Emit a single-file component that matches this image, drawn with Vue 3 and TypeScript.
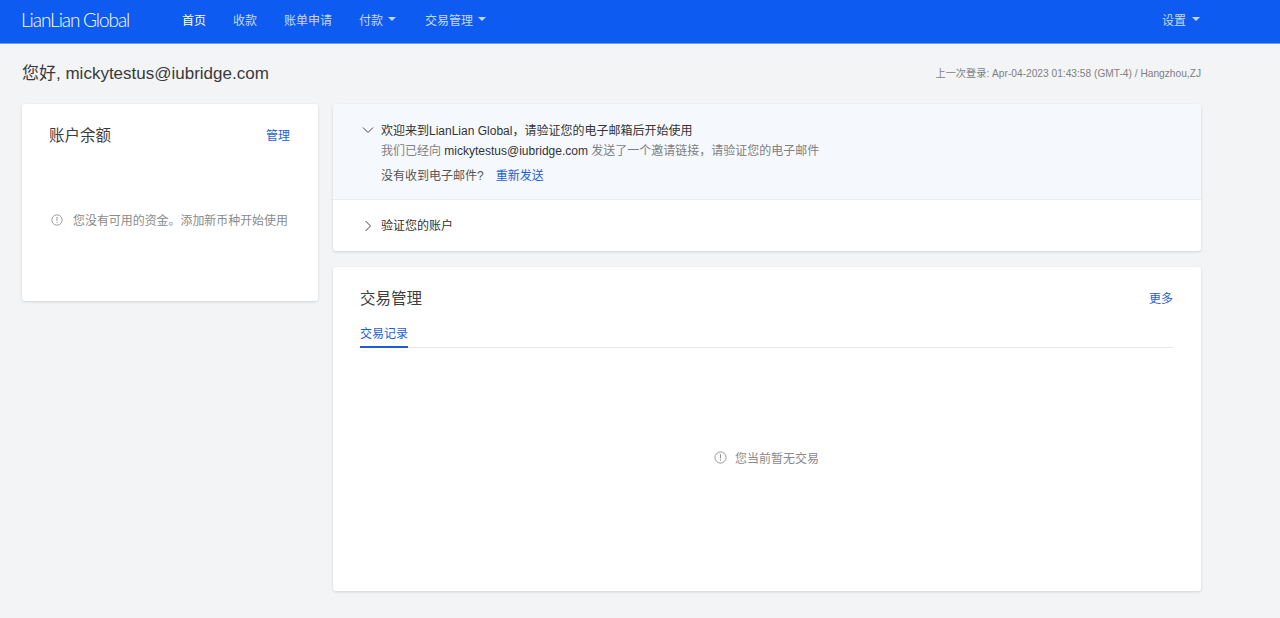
<script setup lang="ts">
const navItems: { label: string; caret: boolean; active?: boolean }[] = [
  { label: '首页', caret: false, active: true },
  { label: '收款', caret: false },
  { label: '账单申请', caret: false },
  { label: '付款', caret: true },
  { label: '交易管理', caret: true },
]
</script>

<template>
  <div class="page">
    <header class="topbar">
      <div class="logo">LianLian Global</div>
      <nav class="nav">
        <span v-for="item in navItems" :key="item.label" class="nav-item" :class="{ active: item.active }">
          {{ item.label }}<i v-if="item.caret" class="caret"></i>
        </span>
      </nav>
      <span class="nav-item settings">设置<i class="caret"></i></span>
    </header>

    <main class="main">
      <div class="greet-row">
        <h1 class="greet">您好, mickytestus@iubridge.com</h1>
        <span class="last-login">上一次登录: Apr-04-2023 01:43:58 (GMT-4) / Hangzhou,ZJ</span>
      </div>

      <div class="columns">
        <section class="card balance">
          <div class="card-head">
            <h2 class="card-title">账户余额</h2>
            <a class="link">管理</a>
          </div>
          <div class="notice balance-notice">
            <svg class="info" viewBox="0 0 14 14" width="12" height="12">
              <circle cx="7" cy="7" r="6" fill="none" stroke="currentColor" stroke-width="1" />
              <path d="M7 3.4v4.6M7 9.2v1.2" fill="none" stroke="currentColor" stroke-width="1.1" />
            </svg>
            <span>您没有可用的资金。添加新币种开始使用</span>
          </div>
        </section>

        <div class="right">
          <section class="card steps">
            <div class="step open">
              <svg class="chev" viewBox="0 0 12 12" width="12" height="12">
                <path d="M1 3.5L6 8.5L11 3.5" fill="none" stroke="currentColor" stroke-width="1" />
              </svg>
              <div class="step-body">
                <div class="step-title">欢迎来到LianLian Global，请验证您的电子邮箱后开始使用</div>
                <div class="step-desc">我们已经向 <span class="email">mickytestus@iubridge.com</span> 发送了一个邀请链接，请验证您的电子邮件</div>
                <div class="step-resend"><span>没有收到电子邮件?</span><a class="link resend">重新发送</a></div>
              </div>
            </div>
            <div class="step closed">
              <svg class="chev" viewBox="0 0 12 12" width="12" height="12">
                <path d="M3.5 1L8.5 6L3.5 11" fill="none" stroke="currentColor" stroke-width="1" />
              </svg>
              <div class="step-title">验证您的账户</div>
            </div>
          </section>

          <section class="card trades">
            <div class="card-head trades-head">
              <h2 class="card-title">交易管理</h2>
              <a class="link">更多</a>
            </div>
            <div class="tabs"><span class="tab">交易记录</span></div>
            <div class="notice empty">
              <svg class="info big" viewBox="0 0 14 14" width="13" height="13">
                <circle cx="7" cy="7" r="6" fill="none" stroke="currentColor" stroke-width="1" />
                <path d="M7 3.4v4.6M7 9.2v1.2" fill="none" stroke="currentColor" stroke-width="1.1" />
              </svg>
              <span>您当前暂无交易</span>
            </div>
          </section>
        </div>
      </div>
    </main>
  </div>
</template>

<style>
html, body { margin: 0; background: #f3f4f6; }
</style>

<style scoped>
.page {
  min-height: 618px;
  background: #f3f4f6;
  font-family: "Liberation Sans", "Noto Sans CJK SC", sans-serif;
  font-size: 12px;
  color: #333;
}
.topbar {
  height: 44px;
  box-sizing: border-box;
  background: #0d5bf0;
  border-bottom: 1px solid #6d9df5;
  display: flex;
  align-items: center;
  padding: 0 80px 5px 21px;
}
.logo {
  width: 161px;
  color: #fff;
  font-family: Lato, sans-serif;
  font-weight: 300;
  font-size: 19px;
  letter-spacing: -1.05px;
  word-spacing: -0.5px;
  white-space: nowrap;
}
.nav { display: flex; gap: 27px; flex: 1; }
.nav-item { color: #c5d8fb; white-space: nowrap; display: inline-flex; align-items: center; }
.nav-item.active { color: #fff; }
.caret {
  width: 0;
  height: 0;
  margin-left: 5px;
  margin-right: 2px;
  border-left: 4px solid transparent;
  border-right: 4px solid transparent;
  border-top: 4px solid #c5d8fb;
}
.settings .caret { margin-left: 6px; margin-right: 0; }
.main { width: 1179px; margin-left: 22px; }
.greet-row {
  height: 60px;
  box-sizing: border-box;
  padding-bottom: 3px;
  display: flex;
  justify-content: space-between;
  align-items: center;
}
.greet { margin: 0 0 3px; font-size: 17px; font-weight: 400; color: #3a3a3a; }
.last-login { font-size: 10.2px; color: #808080; }
.columns { display: flex; gap: 15px; align-items: flex-start; }
.card {
  background: #fff;
  border-radius: 3px;
  box-shadow: 0 1px 3px rgba(0, 0, 0, 0.14);
  box-sizing: border-box;
}
.balance { width: 296px; height: 197px; padding: 22px 28px 22px 27px; }
.card-head { display: flex; justify-content: space-between; align-items: flex-start; }
.card-title { margin: 0; font-size: 15.5px; font-weight: 400; color: #3d3d3d; line-height: 20px; }
.link { color: #1d5ed8; cursor: pointer; line-height: 21px; }
.notice { display: flex; align-items: center; color: #8a8a8a; }
.balance-notice { margin-top: 64px; margin-left: 2px; gap: 10px; white-space: nowrap; margin-right: -10px; font-size: 11.95px; }
.info { flex: none; color: #909090; }
.right { width: 868px; display: flex; flex-direction: column; gap: 16px; }
.steps { height: 147px; overflow: hidden; display: flex; flex-direction: column; }
.step { display: flex; padding-left: 29px; }
.chev { flex: none; color: #444; margin-right: 7px; }
.step.open {
  height: 96px;
  box-sizing: border-box;
  background: #f5f9fd;
  border-bottom: 1px solid #e9edf2;
  padding-top: 20px;
}
.step.closed { flex: 1; align-items: center; }
.step-title { color: #333; line-height: 14px; }
.step-desc { color: #808080; line-height: 14px; margin-top: 6px; }
.email { color: #333; }
.step-resend { margin-top: 11px; color: #555; line-height: 14px; display: flex; gap: 12px; }
.resend { font-size: 12px; line-height: 14px; }
.trades { height: 324px; padding: 22px 28px 0 27px; }
.trades-head { height: 18px; }
.tabs { margin-top: 11px; border-bottom: 1px solid #e5e8ec; height: 30px; box-sizing: border-box; display: flex; }
.tab { color: #1d5ed8; border-bottom: 2px solid #1d5ed8; height: 30px; box-sizing: border-box; line-height: 32px; padding: 0; }
.empty { justify-content: center; gap: 8px; margin-top: 101px; }
</style>
